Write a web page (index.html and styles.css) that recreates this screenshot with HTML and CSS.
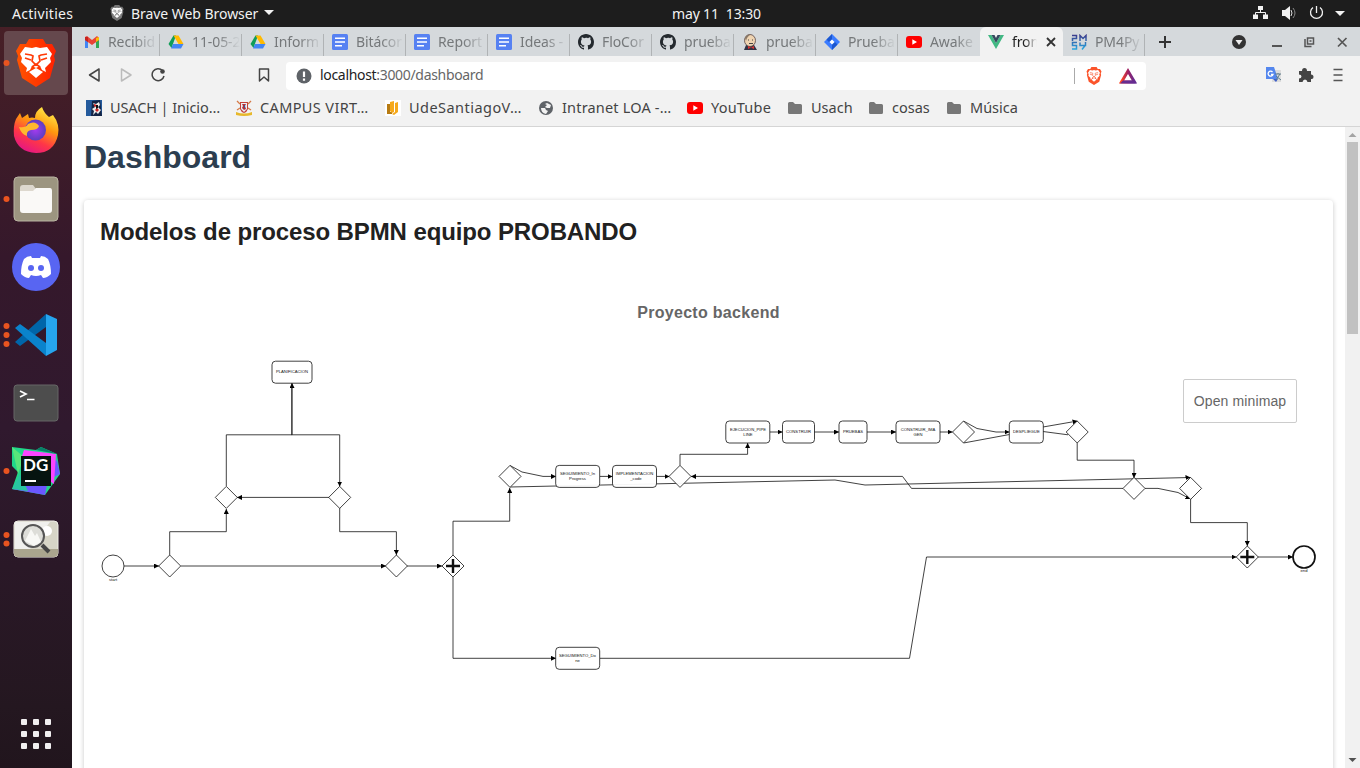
FILE: index.html
```html
<!DOCTYPE html>
<html lang="es">
<head>
<meta charset="utf-8">
<title>Dashboard</title>
<link rel="stylesheet" href="styles.css">
</head>
<body>
<svg width="0" height="0" class="defs">
  <defs>
    <linearGradient id="lion" x1="0" x2="1"><stop offset="0" stop-color="#ff5500"/><stop offset="1" stop-color="#ff2000"/></linearGradient>
    <linearGradient id="fox" x1=".8" y1="0" x2=".3" y2="1"><stop offset="0" stop-color="#fff44f"/><stop offset=".4" stop-color="#ff980e"/><stop offset=".7" stop-color="#ff3647"/><stop offset="1" stop-color="#e31587"/></linearGradient>
    <radialGradient id="globe"><stop offset="0" stop-color="#a43af0"/><stop offset="1" stop-color="#5b3fc0"/></radialGradient>
    <linearGradient id="bat" x1="0" x2="1"><stop offset="0" stop-color="#ff4724"/><stop offset=".5" stop-color="#9e1f63"/><stop offset="1" stop-color="#662d91"/></linearGradient>
    <linearGradient id="pm" x1="0" y1="0" x2="0" y2="1"><stop offset="0" stop-color="#3b3f8f"/><stop offset="1" stop-color="#29a8e0"/></linearGradient>
    <marker id="arrow" viewBox="0 0 10 10" refX="10" refY="5" markerWidth="5" markerHeight="5" markerUnits="userSpaceOnUse" orient="auto"><path d="M0 0L10 5L0 10Z"/></marker>
    <symbol id="brave" viewBox="0 0 40 48"><path d="M10 5L13 0H27L30 5L36 5L40 12L38 17L39 21L34 39L20 48L6 39L1 21L2 17L0 12L4 5Z"/><path fill="#fff" d="M9 8L16 9L20 8L24 9L31 8L36 15L34 19L35 23L29 29L30 33L26 31L24 27L20 29L16 27L14 31L10 33L11 29L5 23L6 19L4 15ZM20 29L27 33L20 39L13 33Z"/><path fill="none" stroke="currentColor" stroke-width="1.7" d="M9 15L15 16L17 17L16 22L20 26L24 22L23 17L25 16L31 15M9 19L15 21M31 19L25 21M16 28L20 25L24 28"/></symbol>
    <symbol id="gmail" viewBox="0 0 16 16"><path fill="#4285f4" d="M1 4L4 6V14H1Z"/><path fill="#34a853" d="M12 6L15 4V14H12Z"/><path fill="#ea4335" d="M1 3L3 2L8 6L13 2L15 4V6L8 11L1 6Z"/><path fill="#c5221f" d="M1 3L4 3V8L1 6Z"/><path fill="#fbbc04" d="M12 4L15 3V6L12 8Z"/></symbol>
    <symbol id="drive" viewBox="0 0 16 16"><path fill="#0f9d58" d="M5.5 1.5H8L3.5 14L0.5 10Z"/><path fill="#ffba00" d="M5.5 1.5H10.5L15.5 10H10.5Z"/><path fill="#4285f4" d="M5 10H15.5L13 14.5H3Z"/></symbol>
    <symbol id="docs" viewBox="0 0 16 16"><rect width="16" height="16" rx="1.5" fill="#5681f2"/><path stroke="#fff" stroke-width="1.5" d="M3 4.2H13M3 8H13M3 11.8H10"/></symbol>
    <symbol id="github" viewBox="0 0 16 16"><path fill="#24292e" d="M8 0C3.58 0 0 3.58 0 8c0 3.54 2.29 6.53 5.47 7.59.4.07.55-.17.55-.38 0-.19-.01-.82-.01-1.49-2.01.37-2.53-.49-2.69-.94-.09-.23-.48-.94-.82-1.13-.28-.15-.68-.52-.01-.53.63-.01 1.08.58 1.23.82.72 1.21 1.87.87 2.33.66.07-.52.28-.87.51-1.07-1.78-.2-3.64-.89-3.64-3.95 0-.87.31-1.59.82-2.15-.08-.2-.36-1.02.08-2.12 0 0 .67-.21 2.2.82A7.4 7.4 0 018 3.86c.68 0 1.36.09 2 .27 1.53-1.04 2.2-.82 2.2-.82.44 1.1.16 1.92.08 2.12.51.56.82 1.27.82 2.15 0 3.07-1.87 3.75-3.65 3.95.29.25.54.73.54 1.48 0 1.07-.01 1.93-.01 2.2 0 .21.15.46.55.38A8.01 8.01 0 0016 8c0-4.42-3.58-8-8-8z"/></symbol>
    <symbol id="youtube" viewBox="0 0 16 16"><rect y="2" width="16" height="12" rx="3" fill="#f00"/><path fill="#fff" d="M6.3 5.3L11 8L6.3 10.7Z"/></symbol>
    <symbol id="folder" viewBox="0 0 16 16"><path fill="#777" d="M1 3.5Q1 2 2.5 2H6L8 4H13.500Q15 4 15 5.500V12.500Q15 14 13.500 14H2.500Q1 14 1 12.500Z"/></symbol>
  </defs>
</svg>

<header class="topbar">
  <span class="activities">Activities</span>
  <svg class="app-icon" width="14" height="16"><use href="#brave" fill="#777" color="#555"/></svg>
  <span class="app-name">Brave Web Browser</span>
  <svg width="10" height="6"><path fill="#f2f2f2" d="M0 0H10L5 5Z"/></svg>
  <span class="clock">may 11&nbsp; 13:30</span>
  <svg class="status" width="100" height="27" viewBox="1250 0 100 27">
    <path fill="#f2f2f2" d="M1258 6H1263V10H1258ZM1253 14.500H1258V19H1253ZM1263 14.500H1268V19H1263Z"/><path fill="none" stroke="#f2f2f2" d="M1260.500 10V12.500M1255.500 15V12.500H1265.500V15"/>
    <path fill="#f2f2f2" d="M1282 10H1285L1290 6V20L1285 16H1282Z"/><path fill="none" stroke="#ddd" d="M1291 10Q1293 13 1291 16"/><path fill="none" stroke="#888" d="M1293 8Q1297 13 1293 18"/>
    <path fill="none" stroke="#f2f2f2" stroke-width="1.300" d="M1313 7.500A6 6 0 1 0 1320 7.500M1316.500 6V13"/><path fill="#f2f2f2" d="M1335 11H1345L1340 16Z"/>
  </svg>
</header>

<div class="desktop">
  <nav class="dock">
    <svg viewBox="0 29 72 68"><rect x="4" y="31" width="64" height="64" rx="4" fill="#65484d"/><circle cx="6.500" cy="63" r="3" fill="#e95420"/><svg x="16" y="39" width="40" height="48"><use href="#brave" fill="url(#lion)" color="#ff3b08"/></svg></svg>
    <svg viewBox="0 97 72 68"><path fill="url(#fox)" d="M16 119L20 113L22 118L28 114L29 118Q32 117 35 118Q35 111 42 107Q44 113 49 117L53 115Q60 124 58 135Q54 153 36 153Q18 152 14 136Q13 126 16 119Z"/><circle cx="35.500" cy="130" r="10.500" fill="url(#globe)"/><path fill="#ffb92e" d="M19 127Q26 128 28 124Q35 120 39 126Q38 130 31 130Q26 131 27 136Q21 134 19 127Z"/></svg>
    <svg viewBox="0 165 72 68"><circle cx="6.500" cy="199" r="3" fill="#e95420"/><rect x="14" y="177" width="44" height="44" rx="4" fill="#9c9580" stroke="#b9b4a2"/><path fill="#ddd8ce" d="M20 188Q20 185 23 185H33L36 189V198H20Z"/><path fill="#faf9f7" d="M20 191H33L36 188H50Q52 188 52 191V210Q52 213 49 213H23Q20 213 20 210Z"/></svg>
    <svg viewBox="0 233 72 68"><circle cx="36" cy="267" r="24" fill="#5865f2"/><path fill="#fff" d="M31 256Q27 256 24 259Q21 265 21 274Q25 278 29 278L31 275Q36 277 41 275L43 278Q47 278 51 274Q51 265 48 259Q45 256 41 256L40 258H32Z"/><circle cx="31" cy="268" r="3" fill="#5865f2"/><circle cx="41" cy="268" r="3" fill="#5865f2"/></svg>
    <svg viewBox="0 301 72 68"><g fill="#e95420"><circle cx="6.500" cy="326" r="3"/><circle cx="6.500" cy="335" r="3"/><circle cx="6.500" cy="344" r="3"/></g><path fill="#0065a9" d="M15 342L46 314V327L20 346Z"/><path fill="#0a83cc" d="M15 328L20 324L46 343V356Z"/><path fill="#26a5ee" d="M46 314L57 319V350L46 356Z"/></svg>
    <svg viewBox="0 369 72 68"><rect x="14" y="385" width="44" height="36" rx="3" fill="#4d4d4d" stroke="#666"/><path fill="none" stroke="#fff" stroke-width="1.700" d="M20 391L26 394L20 397M27 399.500H34.500"/></svg>
    <svg viewBox="0 437 72 68"><circle cx="6.500" cy="471" r="3" fill="#e95420"/><path fill="#21d789" d="M12 447L36 450L41 447L57 454L60 474L45 495L12 489L18 472L12 466Z"/><path fill="#6b57ff" d="M22 484L12 489L45 495L48 480L60 474L57 460Z"/><path fill="#28c5a0" d="M12 489L20 474L28 491Z"/><path fill="#fc45ff" d="M24 450L56 454L54 484L48 480V456H22Z"/><path fill="#087f68" d="M36 450L41 447L57 454Z"/><path fill="#58e57b" d="M12 447L24 457L18 474Z"/><rect x="21" y="456" width="30" height="30" fill="#061410"/><text x="23" y="471" class="dg">DG</text><path fill="#fff" d="M25 480H36V482H25Z"/></svg>
    <svg viewBox="0 505 72 68"><g fill="#e95420"><circle cx="6.500" cy="535" r="3"/><circle cx="6.500" cy="543.500" r="3"/></g><rect x="14" y="521" width="44" height="36" rx="4" fill="#d7d5c7" stroke="#efeee7"/><path fill="#f0f0ed" d="M15 522H50L30 549H15Z"/><path fill="#aaa58e" d="M14 549H58V553Q58 557 54 557H18Q14 557 14 553Z"/><circle cx="47" cy="531" r="5" fill="#fff"/><circle cx="33" cy="536" r="11" fill="#ddddd8" stroke="#565656" stroke-width="2"/><path fill="#f8f8f5" d="M25 541L31 529L35 536L37 533L41 542L34 546Z"/><path stroke="#454545" stroke-width="4" d="M42 545L49 552"/></svg>
    <svg class="apps" viewBox="0 700 72 68"><g fill="#f1eff0"><rect x="21" y="719" width="6" height="6" rx="1"/><rect x="33" y="719" width="6" height="6" rx="1"/><rect x="45" y="719" width="6" height="6" rx="1"/><rect x="21" y="731" width="6" height="6" rx="1"/><rect x="33" y="731" width="6" height="6" rx="1"/><rect x="45" y="731" width="6" height="6" rx="1"/><rect x="21" y="743" width="6" height="6" rx="1"/><rect x="33" y="743" width="6" height="6" rx="1"/><rect x="45" y="743" width="6" height="6" rx="1"/></g></svg>
  </nav>

  <section class="browser">
    <div class="tabs">
      <div class="tab first"><svg><use href="#gmail"/></svg><span>Recibid</span></div>
      <div class="tab"><svg><use href="#drive"/></svg><span>11-05-2</span></div>
      <div class="tab"><svg><use href="#drive"/></svg><span>Inform</span></div>
      <div class="tab"><svg><use href="#docs"/></svg><span>Bitácor</span></div>
      <div class="tab"><svg><use href="#docs"/></svg><span>Report</span></div>
      <div class="tab"><svg><use href="#docs"/></svg><span>Ideas -</span></div>
      <div class="tab"><svg><use href="#github"/></svg><span>FloCor</span></div>
      <div class="tab"><svg><use href="#github"/></svg><span>prueba</span></div>
      <div class="tab"><svg viewBox="0 0 16 16"><path fill="#334" d="M2 16L4 11H12L15 16Z"/><ellipse cx="8" cy="6.500" rx="5.500" ry="6" fill="#efd4b2" stroke="#544" stroke-width=".8"/><path fill="#876" d="M3 4Q4 0 9 .5Q5 2 4 7Z"/><path stroke="#444" d="M6 6H7M10 6H11M7 9.500H11"/><path fill="#d33" d="M6 12L9 13.500L12 12V15L9 13.500L6 15Z"/></svg><span>prueba</span></div>
      <div class="tab"><svg viewBox="0 0 16 16"><path fill="#3b7cff" d="M8 0L16 8L8 16L0 8Z"/><path fill="#1d58cf" d="M8 0V5.500L5 8L2.500 5.500ZM8 16V10.500L11 8L13.500 10.500Z"/><path fill="#fff" d="M8 5.500L10.500 8L8 10.500L5.500 8Z"/></svg><span>Prueba</span></div>
      <div class="tab last"><svg><use href="#youtube"/></svg><span>Awake</span></div>
      <div class="tab active"><svg viewBox="0 0 16 16"><path fill="#41b883" d="M0 1H3.500L8 9L12.500 1H16L8 15Z"/><path fill="#35495e" d="M3.500 1H6.500L8 4L9.500 1H12.500L8 9Z"/></svg><span>fron</span><svg class="close" viewBox="0 0 10 10"><path d="M1 1L9 9M9 1L1 9"/></svg></div>
      <div class="tab"><svg viewBox="0 0 16 16"><path fill="none" stroke="url(#pm)" stroke-width="1.500" d="M1 1.500H5.500V4.500H1.500V7M9 7V1.500L12 4.500L15 1.500V7M6 8.500H1.500V11.500H5.500V15H1M9 8.500V11.500H14.500V8M14.500 11L11 15.500"/></svg><span>PM4Py</span></div>
      <svg class="window-tools" width="215" height="29" viewBox="1145 27 215 29">
        <path stroke="#333" stroke-width="2" d="M1159 42H1171M1165 36V48"/><circle cx="1239" cy="42" r="7" fill="#333"/><path fill="#eee" d="M1235.500 40H1242.500L1239 45Z"/><path stroke="#555" stroke-width="2" d="M1272 46H1282"/><path fill="none" stroke="#555" stroke-width="1.500" d="M1307.500 38H1313.500V44H1307.500ZM1305 39V46.500H1311.500M1309.500 41H1311.500"/><path stroke="#555" stroke-width="1.700" d="M1338 38L1346.500 46.500M1346.500 38L1338 46.500"/>
      </svg>
    </div>

    <div class="toolbar">
      <svg class="nav-icons" width="214" height="39" viewBox="72 56 214 39"><g fill="none" stroke="#444" stroke-width="1.500" stroke-linejoin="round"><path d="M89.500 75L99 69V81Z"/><path stroke="#bbb" d="M131 75L121.500 69V81Z"/><path d="M162.500 70.500A6 6 0 1 0 164 76M259.500 69H268.500V81L264 77L259.500 81Z"/></g><circle cx="162.500" cy="71.500" r="2.300" fill="#444"/></svg>
      <div class="address">
        <svg width="16" height="16" viewBox="0 0 16 16"><circle cx="8" cy="8" r="7.500" fill="#5f6368"/><path stroke="#fff" stroke-width="2.200" d="M8 3.500V9M8 10.500V12.700"/></svg>
        <span class="url"><b>localhost</b>:3000/dashboard</span>
        <i class="rule"></i>
        <svg class="shield" width="16" height="18"><use href="#brave" fill="#fb542b" color="#fb542b"/></svg>
        <svg width="18" height="16" viewBox="0 0 18 16"><path fill="none" stroke="url(#bat)" stroke-width="3" d="M9 3L15.500 14H2.500Z"/><path fill="#662d91" d="M4 12.500H14L17 15.500H1Z"/></svg>
      </div>
      <svg class="extensions" width="214" height="39" viewBox="1146 56 214 39"><rect x="1272" y="70" width="9" height="12" fill="#ddd"/><path fill="#5587ee" d="M1266 67H1274L1278 79H1266Z"/><path fill="#3e5fc8" d="M1273 79H1278L1276 82Z"/><path fill="none" stroke="#fff" stroke-width="1.300" d="M1272.500 72A2.500 2.500 0 1 0 1273 74.500H1271"/><path fill="none" stroke="#607d8b" d="M1275 74H1281M1278 73V74M1280 74L1276 80M1276 76L1281 80"/><path fill="#444" d="M1299 71H1302Q1302 68 1304.500 68T1307 71H1311V74.500Q1313.500 74.500 1313.500 77T1311 79V82H1307.500Q1307 79.500 1305 79.500T1302.500 82H1299V78.500Q1301.500 78.500 1301.500 76.500T1299 74.500Z"/><path stroke="#555" stroke-width="1.700" d="M1333.500 69.500H1342.500M1333.500 75H1342.500M1333.500 80.500H1342.500"/></svg>
    </div>

    <div class="bookmarks">
      <div class="mark m1"><svg viewBox="0 0 16 16"><rect width="16" height="16" fill="#245a9c"/><path fill="#132445" d="M6 1L14 0L16 16H5Z"/><path fill="#eee" d="M7 3L10 4L13 2L14 5L12 7L15 10L12 14L10 12L7 15L8 11L6 9L9 7Z"/><path fill="#c22" d="M8 4L11 5L10 7L8 6ZM11 8L13 10L11 12L9 10Z"/><path fill="#111" d="M10 5H12V8L10 9Z"/></svg><span>USACH | Inicio…</span></div>
      <div class="mark m2"><svg viewBox="0 0 16 16"><path fill="#c44139" d="M4 2H12V9Q11 12 8 13Q5 12 4 9Z"/><path fill="#e9eef6" d="M5 3H11V9L8 12L5 9Z"/><path fill="#b52f35" d="M6 4H10L9 6L10 9L8 10L6 8L7 6Z"/><path fill="#345798" d="M8 5H9V8H8Z"/><path fill="none" stroke="#d67b48" stroke-width="1.300" d="M1 1L4 4M12 4L15 1M1 10L4 8M12 8L15 10"/><path fill="#e7b82b" d="M0 12Q8 15 16 12V15Q8 17 0 15Z"/></svg><span>CAMPUS VIRT…</span></div>
      <div class="mark m3"><svg viewBox="0 0 16 16"><path fill="#fff" d="M0 0H16V16H0Z"/><path fill="#b77b13" d="M2 4H5V12H7V14H2Z"/><path fill="#f6a91b" d="M5 2L9 1V12L7 13L5 11ZM10 3L13 2V12L9 15L7 14L10 12Z"/></svg><span>UdeSantiagoV…</span></div>
      <div class="mark m4"><svg viewBox="0 0 16 16"><circle cx="8" cy="8" r="7" fill="#5f6368"/><path fill="#f2f2f2" d="M9 3L13 5L12 8H9L7 7L9 5L7 4ZM3 8L7 8L8 10L10 11L8 14Q3 13 3 8Z"/></svg><span>Intranet LOA -…</span></div>
      <div class="mark m5"><svg><use href="#youtube"/></svg><span>YouTube</span></div>
      <div class="mark m6"><svg><use href="#folder"/></svg><span>Usach</span></div>
      <div class="mark m7"><svg><use href="#folder"/></svg><span>cosas</span></div>
      <div class="mark"><svg><use href="#folder"/></svg><span>Música</span></div>
    </div>

    <div class="viewport">
      <main class="page">
        <h1>Dashboard</h1>
        <article class="card">
          <h2>Modelos de proceso BPMN equipo PROBANDO</h2>
          <h3>Proyecto backend</h3>
          <div class="canvas">
            <svg class="diagram" width="1217" height="350" viewBox="100 340 1217 350">
              <g class="flow">
                <path d="M124 566H159"/><path d="M181 566H386"/><path d="M407 566H442"/>
                <path d="M169.700 555V531.700H226.300V509"/><path d="M226.300 486V434.800H292V383"/><path d="M291.800 383V434.800H339.700V486.500"/><path d="M329 497.400H237"/><path d="M339.700 508V531.700H396.400V555"/>
                <path d="M453 555V521.200H509.700V488"/><path d="M453 577V658.300H556"/>
                <path d="M510 465.500L522 472L543 476.400H556"/><path d="M600 476.400H612.500"/><path d="M657 476.400H669.500"/>
                <path d="M680 465.500V454.300H747.600V443"/><path d="M770 432H782.500"/><path d="M814 432H839"/><path d="M867 432H896"/><path d="M940 432H952.500"/>
                <path d="M963.500 421L977 428.500L996 432H1009.500"/><path class="plain" d="M963.500 443L1009.500 434.500M1043 431.500L1068 434.800"/><path d="M1043 427L1077.500 421"/>
                <path d="M1077.200 443V460.200H1134V478"/><path d="M1123 488.400H911.500L902.500 476.400H691"/><path d="M510 487L835 480L865 485L1190.500 477.500"/><path d="M1145 488.400H1158L1178 492.500L1190.500 499"/>
                <path d="M1190.600 499V522.600H1247.300V546"/><path d="M600 658.300H909.500L926.500 557H1236.500"/><path d="M1258 557H1293"/>
              </g>
              <g class="node">
                <circle cx="113" cy="566" r="11"/><path d="M169.700 555L180.700 566L169.700 577L158.700 566ZM226.300 486.400L237.300 497.400L226.300 508.400L215.300 497.400ZM339.700 486.400L350.700 497.400L339.700 508.400L328.700 497.400ZM396.400 555L407.400 566L396.400 577L385.400 566ZM453 555L464 566L453 577L442 566ZM510 465.400L521 476.400L510 487.400L499 476.400ZM680 465.400L691 476.400L680 487.400L669 476.400ZM963.500 421L974.500 432L963.500 443L952.500 432ZM1077.200 421L1088.200 432L1077.200 443L1066.200 432ZM1134 477.400L1145 488.400L1134 499.400L1123 488.400ZM1190.600 477.400L1201.600 488.400L1190.600 499.400L1179.600 488.400ZM1247.300 546L1258.300 557L1247.300 568L1236.300 557Z"/>
                <rect x="272" y="361.200" width="40" height="22" rx="3.500"/><rect x="555.700" y="465.400" width="44" height="22" rx="3.500"/><rect x="612.500" y="465.400" width="44" height="22" rx="3.500"/><rect x="725.800" y="421" width="44" height="22" rx="3.500"/><rect x="782.500" y="421" width="32" height="22" rx="3.500"/><rect x="839" y="421" width="28" height="22" rx="3.500"/><rect x="896" y="421" width="44" height="22" rx="3.500"/><rect x="1009.300" y="421" width="34" height="22" rx="3.500"/><rect x="555.700" y="647.300" width="44" height="22" rx="3.500"/>
                <circle class="end" cx="1304" cy="557" r="11"/>
              </g>
              <path class="plus" d="M446 566H460M453 559V573M1240.300 557H1254.300M1247.300 550V564"/>
              <g class="labels">
                <text x="292" y="373">PLANIFICACION</text><text x="577.500" y="475">SEGUIMIENTO_In</text><text x="577.500" y="480">Progress</text><text x="634.500" y="475">IMPLEMENTACION</text><text x="636" y="480">_code</text><text x="748" y="431">EJECUCION_PIPE</text><text x="748" y="436">LINE</text><text x="798.500" y="433.300">CONSTRUIR</text><text x="853" y="433.300">PRUEBAS</text><text x="918" y="431">CONSTRUIR_IMA</text><text x="918" y="436">GEN</text><text x="1026.300" y="433.300">DESPLIEGUE</text><text x="577.500" y="657">SEGUIMIENTO_Do</text><text x="577.500" y="662">ne</text><text x="113" y="581">start</text><text x="1304" y="572">end</text>
              </g>
            </svg>
            <button class="minimap">Open minimap</button>
          </div>
        </article>
      </main>
      <div class="scrollbar"><svg width="15" height="15"><path fill="#a3a3a3" d="M3.500 10H11.500L7.500 6Z"/></svg><div class="thumb"></div><svg class="down" width="15" height="15"><path fill="#505050" d="M3.500 5H11.500L7.500 9Z"/></svg></div>
    </div>
  </section>
</div>
</body>
</html>
```
FILE: styles.css
```css
* { box-sizing: border-box; }
body { margin: 0; width: 1360px; height: 768px; overflow: hidden; display: flex; flex-direction: column; background: #fff; font-family: "Noto Sans", sans-serif; }
svg { display: block; flex: none; }
.defs { position: absolute; }
.topbar { height: 27px; flex: none; display: flex; align-items: center; padding-bottom: 1px; background: #1d1d1d; color: #f2f2f2; font-size: 14px; letter-spacing: -.2px; white-space: nowrap; }
.activities { width: 98px; padding-left: 12px; letter-spacing: .3px; }
.app-icon { margin: 0 7px 0 12px; }
.app-name { width: 133px; letter-spacing: -.05px; }
.clock { margin-left: 398px; width: 92px; letter-spacing: -.15px; }
.status { margin-left: auto; margin-right: 10px; }
.desktop { flex: 1; display: flex; min-height: 0; }
.dock { width: 72px; flex: none; padding-top: 2px; display: flex; flex-direction: column; background: linear-gradient(#471f26 0, #35182b 230px, #30192e 400px, #241720 680px, #21151d); }
.dock svg { width: 72px; height: 68px; overflow: visible; }
.dock svg svg { width: 40px; height: 48px; }
.dock .apps { margin-top: auto; }
.dg { font: bold 17px Lato, sans-serif; fill: #fff; }
.browser { flex: 1; display: flex; flex-direction: column; min-width: 0; }
.tabs { height: 29px; flex: none; display: flex; padding-left: 6px; background: #d5d9dc; }
.tab { width: 82px; flex: none; display: flex; align-items: center; gap: 8px; padding: 0 0 0 8px; color: #75787a; font-size: 14px; background: linear-gradient(#b0b3b5, #b0b3b5) right 7px / 1px 22px no-repeat; }
.tab svg { width: 16px; height: 16px; }
.tab span { flex: 1; min-width: 0; overflow: hidden; white-space: nowrap; letter-spacing: -.1px; -webkit-mask-image: linear-gradient(to right, #000 50%, transparent 96%); }
.tab.first { padding-left: 6px; }
.tab.last { background: none; }
.tab.active { background: #f2f2f2; border-radius: 6px 6px 0 0; color: #222; width: 83px; padding-right: 7px; }
.tab .close { width: 10px; height: 10px; fill: none; stroke: #333; stroke-width: 1.8; }
.window-tools { margin-left: auto; }
.toolbar { height: 39px; flex: none; display: flex; align-items: center; background: #f2f2f2; }
.address { flex: 1; height: 28px; padding: 0 9px 0 10px; display: flex; align-items: center; background: #fff; border-radius: 4px; }
.url { margin: -2px 0 0 8px; flex: 1; font-size: 14px; letter-spacing: -.32px; color: #666; }
.url b { font-weight: 400; color: #222; }
.rule { width: 1px; height: 16px; background: #aaa; }
.shield { margin: 0 17px 0 11px; }
.bookmarks { height: 32px; flex: none; padding: 0 0 6px 14px; display: flex; align-items: center; background: #f2f2f2; border-bottom: 1px solid #d5d5d5; color: #444; font-size: 14.5px; white-space: nowrap; }
.mark { display: flex; align-items: center; gap: 8px; }
.mark span { margin-top: -2px; }
.mark svg { width: 16px; height: 16px; }
.m1 { width: 150px; letter-spacing: -.1px; }
.m2 { width: 149px; letter-spacing: .38px; }
.m3 { width: 153px; letter-spacing: .46px; }
.m4 { width: 149px; letter-spacing: .18px; }
.m5 { width: 100px; letter-spacing: .2px; }
.m6 { width: 81px; }
.m7 { width: 78px; }
.viewport { flex: 1; display: flex; min-height: 0; }
.page { flex: 1; padding: 12px 12px 0; font-family: "Liberation Sans", Arial, sans-serif; overflow: hidden; }
h1 { margin: 0 0 25px; font-size: 32px; line-height: 36px; color: #2c3e50; }
.card { height: 700px; padding: 16px; border-radius: 4px; box-shadow: 0 1px 5px rgba(0, 0, 0, .22); }
h2 { margin: 0; font-size: 24px; line-height: 32px; letter-spacing: -.11px; color: #212121; }
h3 { margin: 55px 0 18px; font-size: 16px; line-height: 19px; letter-spacing: .3px; text-align: center; color: #666; }
.canvas { position: relative; }
.minimap { position: absolute; top: 39px; right: 20px; width: 114px; height: 44px; border: 1px solid #ccc; border-radius: 2px; background: rgba(255, 255, 255, .9); color: #666; font: 14px "Liberation Sans", Arial, sans-serif; letter-spacing: .12px; padding: 0; }
.flow path { fill: none; stroke: #111; stroke-width: .8; marker-end: url(#arrow); }
.flow .plain { marker-end: none; }
.node > * { fill: #fff; fill-opacity: .95; stroke: #111; stroke-width: .8; }
.node .end { stroke-width: 1.7; }
.plus { stroke: #111; stroke-width: 2.4; }
.labels { font: 4.2px "Liberation Sans", Arial, sans-serif; text-anchor: middle; fill: #111; }
.scrollbar { width: 15px; flex: none; display: flex; flex-direction: column; background: #f1f1f1; }
.thumb { height: 192px; margin: 0 2px; background: #c1c1c1; }
.down { margin-top: auto; }
```
